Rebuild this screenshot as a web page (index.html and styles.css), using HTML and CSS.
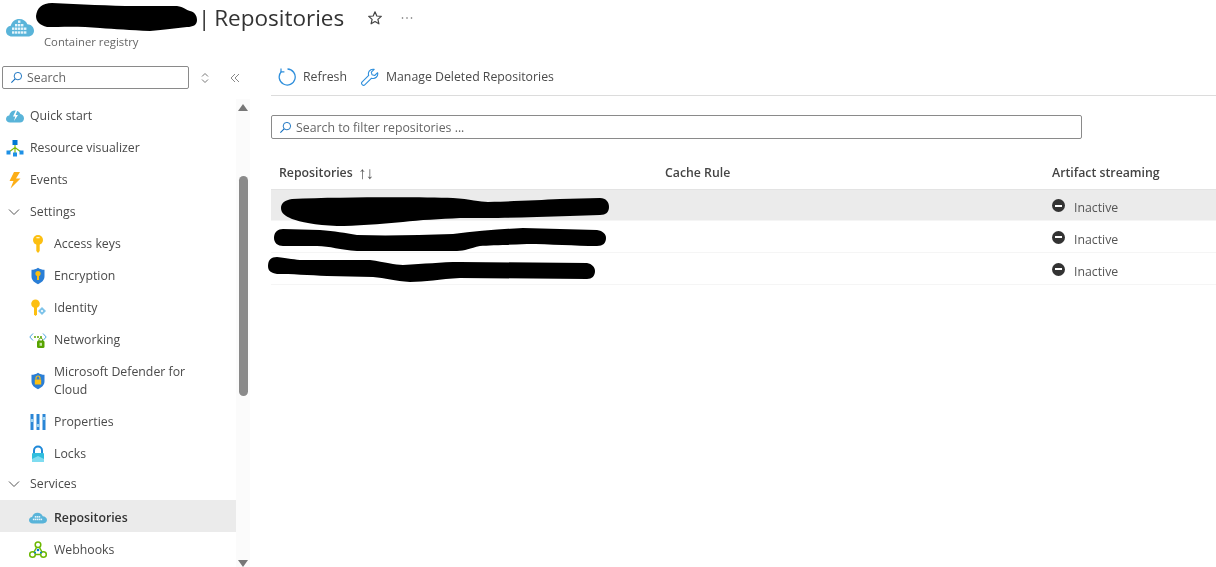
FILE: index.html
```html
<!DOCTYPE html>
<html lang="en">
<head>
<meta charset="utf-8">
<title>Repositories</title>
<link rel="stylesheet" href="styles.css">
</head>
<body>
<div class="page">
  <header class="header">
    <svg class="logo" viewBox="0 0 28 20" aria-hidden="true">
      <path d="M6 19.500C2.600 19.500 0 17.200 0 14c0-2.900 2-5 4.800-5.300C5.800 4.500 9.200 2 13.300 2c3.700 0 6.800 2 8.100 5.300 3.600 0 6.600 2.900 6.600 6.400 0 3.300-2.700 5.800-6 5.800z" fill="#59b4d9"/>
      <g fill="#e4f4fb"><rect x="12" y="3.500" width="2.400" height="2.400"/><rect x="9" y="7" width="2.400" height="2.400"/><rect x="12" y="7" width="2.400" height="2.400"/><rect x="15" y="7" width="2.400" height="2.400"/><rect x="6" y="10.500" width="2.400" height="2.400"/><rect x="9" y="10.500" width="2.400" height="2.400"/><rect x="12" y="10.500" width="2.400" height="2.400"/><rect x="15" y="10.500" width="2.400" height="2.400"/><rect x="18" y="10.500" width="2.400" height="2.400"/><rect x="6" y="14.300" width="2.400" height="2.400"/><rect x="9" y="14.300" width="2.400" height="2.400"/><rect x="12" y="14.300" width="2.400" height="2.400"/><rect x="15" y="14.300" width="2.400" height="2.400"/><rect x="18" y="14.300" width="2.400" height="2.400"/></g>
    </svg>
    <div class="heading">
      <div class="title-row">
        <h1 class="title">| Repositories</h1>
        <svg class="star" viewBox="0 0 16 16" aria-hidden="true"><path d="M8 1.800l1.800 4.200 4.500.4-3.400 3 1 4.400L8 11.500l-3.900 2.300 1-4.400-3.400-3 4.500-.4z" fill="none" stroke="#444" stroke-width="1.200" stroke-linejoin="round"/></svg>
        <svg class="more" viewBox="0 0 12 4" aria-hidden="true"><circle cx="1.500" cy="2" r=".8" fill="#666"/><circle cx="6" cy="2" r=".8" fill="#666"/><circle cx="10.500" cy="2" r=".8" fill="#666"/></svg>
      </div>
      <div class="subtitle">Container registry</div>
    </div>
  </header>

  <div class="body">
    <aside class="sidebar">
      <div class="side-search">
        <div class="search-box">
          <svg class="lens" viewBox="0 0 14 14" aria-hidden="true"><circle cx="8.500" cy="5.500" r="4" fill="none" stroke="#0f6cbd" stroke-width="1"/><path d="M5.500 8.500L1.500 12.500" stroke="#0f6cbd" stroke-width="1.200"/></svg>
          <span>Search</span>
        </div>
        <svg class="updown" viewBox="0 0 8 12" aria-hidden="true"><path d="M1 4.500L4 1.500l3 3M1 7.500l3 3 3-3" fill="none" stroke="#777" stroke-width="1"/></svg>
        <svg class="collapse" viewBox="0 0 10 10" aria-hidden="true"><path d="M5 1L1 5l4 4M9 1L5 5l4 4" fill="none" stroke="#888" stroke-width="1"/></svg>
      </div>
      <div class="nav-wrap">
        <nav class="nav">
          <a class="item">
            <svg class="ico" viewBox="0 0 18 18"><path d="M4 15.500C1.800 15.500 0 14 0 12c0-1.900 1.400-3.300 3.200-3.500C3.800 5.400 6.200 3.500 9 3.500c2.500 0 4.600 1.400 5.400 3.600C16.400 7.400 18 9.200 18 11.400c0 2.300-1.800 4.100-4 4.100z" fill="#59b4d9"/><path d="M10 3L7 9.500h2.300L8 14l4-6H9.600L11.500 3z" fill="#fff"/></svg>
            <span>Quick start</span>
          </a>
          <a class="item">
            <svg class="ico" viewBox="0 0 18 18"><path d="M9 5v6M9 8.500L3 13M9 8.500L15 13M9 11v3" stroke="#7fba00" stroke-width="1.100" fill="none"/><rect x="6.500" y="1" width="5" height="5" fill="#0078d4"/><rect x="0.500" y="11.500" width="4" height="4" fill="#1e90e6"/><rect x="13.500" y="11.500" width="4" height="4" fill="#1e90e6"/><rect x="7" y="13.500" width="4" height="4" fill="#1e90e6"/></svg>
            <span>Resource visualizer</span>
          </a>
          <a class="item">
            <svg class="ico" viewBox="0 0 18 18"><path d="M8 1h6L10 7.500h4.500L4.500 17.500 7.500 10H3.500z" fill="#fcae17"/></svg>
            <span>Events</span>
          </a>
          <a class="item group">
            <svg class="chev" viewBox="0 0 12 8"><path d="M1 1.500l5 5 5-5" fill="none" stroke="#555" stroke-width="1"/></svg>
            <span>Settings</span>
          </a>
          <a class="item sub">
            <svg class="ico" viewBox="0 0 18 18"><circle cx="9" cy="5" r="5" fill="#fcbf11"/><path d="M7.300 8h3.400v8L9 18l-1.700-2z" fill="#fcbf11"/><rect x="7.400" y="2" width="3.200" height="1.300" fill="#fff3c4"/></svg>
            <span>Access keys</span>
          </a>
          <a class="item sub">
            <svg class="ico" viewBox="0 0 18 18"><path d="M9 .800c2 1.600 4.200 2 6.500 2v6.500c0 3.900-3 6.500-6.500 7.900-3.500-1.400-6.500-4-6.500-7.900V2.800c2.300 0 4.500-.4 6.500-2z" fill="#2a7ed6"/><circle cx="9" cy="6.500" r="2.600" fill="#fcbf11"/><rect x="8" y="8" width="2" height="5" fill="#fcbf11"/></svg>
            <span>Encryption</span>
          </a>
          <a class="item sub">
            <svg class="ico" viewBox="0 0 18 18"><circle cx="6.500" cy="4.800" r="4.300" fill="#fcbf11"/><path d="M5 7.500h3v8L6.500 17 5 15.500z" fill="#fcbf11"/><path d="M13 8l4 4-4 4-4-4z" fill="#7fc4ea"/><circle cx="13" cy="12" r="1.100" fill="#fff"/></svg>
            <span>Identity</span>
          </a>
          <a class="item sub">
            <svg class="ico" viewBox="0 0 18 18"><path d="M4 2.500L.8 6 4 9.500M14 2.500L17.200 6 14 9.500" fill="none" stroke="#4aa3df" stroke-width="1"/><g fill="#57a300"><circle cx="6" cy="6" r="1"/><circle cx="9" cy="6" r="1"/><circle cx="12" cy="6" r="1"/></g><rect x="8" y="9.500" width="7.500" height="7.500" rx="1.500" fill="#57a300"/><path d="M10 10V8.500a1.800 1.800 0 013.500 0V10" fill="none" stroke="#57a300"/><rect x="10.600" y="11.800" width="2.400" height="3" fill="#c9e6a5"/></svg>
            <span>Networking</span>
          </a>
          <a class="item sub tall">
            <svg class="ico" viewBox="0 0 18 18"><path d="M9 .800c2 1.600 4.200 2 6.500 2v6.500c0 3.900-3 6.500-6.500 7.900-3.500-1.400-6.500-4-6.500-7.900V2.800c2.300 0 4.500-.4 6.500-2z" fill="#2a7ed6"/><rect x="5.800" y="7.500" width="6.400" height="5" fill="#fcbf11"/><path d="M7 7.500V6a2 2 0 014 0v1.500" fill="none" stroke="#fcbf11" stroke-width="1.200"/></svg>
            <span>Microsoft Defender for Cloud</span>
          </a>
          <a class="item sub">
            <svg class="ico" viewBox="0 0 18 18"><rect x="1.500" y="1" width="3" height="16" fill="#2a86d6"/><rect x="7.500" y="1" width="3" height="16" fill="#2a86d6"/><rect x="13.500" y="1" width="3" height="16" fill="#2a86d6"/><rect x="1.500" y="6" width="3" height="3" fill="#9fd4f2"/><rect x="7.500" y="11" width="3" height="3" fill="#9fd4f2"/><rect x="13.500" y="4" width="3" height="3" fill="#9fd4f2"/></svg>
            <span>Properties</span>
          </a>
          <a class="item sub">
            <svg class="ico" viewBox="0 0 18 18"><path d="M5 8V5.500a4 4 0 018 0V8" fill="none" stroke="#1e88d8" stroke-width="2"/><rect x="3" y="8" width="12" height="9" rx="1" fill="#32bedd"/><path d="M3 14l6-3 6 3v3H3z" fill="#7fdcf0"/></svg>
            <span>Locks</span>
          </a>
          <a class="item group short">
            <svg class="chev" viewBox="0 0 12 8"><path d="M1 1.500l5 5 5-5" fill="none" stroke="#555" stroke-width="1"/></svg>
            <span>Services</span>
          </a>
          <a class="item sub active">
            <svg class="ico" viewBox="0 0 28 20"><path d="M6 18.500C2.600 18.500 0 16.500 0 13.500c0-2.900 2-4.800 4.800-5.100C5.800 4.500 9.200 2 13.300 2c3.700 0 6.800 2 8.100 5.300 3.600 0 6.600 2.700 6.600 6 0 3.100-2.700 5.200-6 5.200z" fill="#59b4d9"/><g fill="#e8f5fb"><rect x="9" y="7" width="2.400" height="2.400"/><rect x="12" y="7" width="2.400" height="2.400"/><rect x="15" y="7" width="2.400" height="2.400"/><rect x="6" y="11" width="2.400" height="2.400"/><rect x="9" y="11" width="2.400" height="2.400"/><rect x="12" y="11" width="2.400" height="2.400"/><rect x="15" y="11" width="2.400" height="2.400"/><rect x="18" y="11" width="2.400" height="2.400"/></g></svg>
            <span>Repositories</span>
          </a>
          <a class="item sub last">
            <svg class="ico" viewBox="0 0 18 18"><g fill="none" stroke="#6bb700" stroke-width="1.500"><circle cx="9" cy="3.800" r="2.800"/><circle cx="3.500" cy="13.500" r="2.800"/><circle cx="14.500" cy="13.500" r="2.800"/><path d="M6 13.500h6M7.800 6L5 11M10.200 6L13 11"/></g><circle cx="9" cy="9" r="1.300" fill="#0078d4"/><circle cx="6" cy="11.500" r="1" fill="#0078d4"/><circle cx="12" cy="11.500" r="1" fill="#0078d4"/></svg>
            <span>Webhooks</span>
          </a>
        </nav>
        <div class="track">
          <span class="arrow up"></span>
          <span class="thumb"></span>
          <span class="arrow down"></span>
        </div>
      </div>
    </aside>

    <main class="main">
      <div class="toolbar">
        <button class="tool">
          <svg class="tool-ico" viewBox="0 0 18 18"><path d="M9.500 1a8 8 0 11-6.300 2.700" fill="none" stroke="#2f8fdc" stroke-width="1.300"/><path d="M3 .5v3.400h3.400" fill="none" stroke="#2f8fdc" stroke-width="1.200"/></svg>
          <span>Refresh</span>
        </button>
        <button class="tool">
          <svg class="tool-ico" viewBox="0 0 18 18"><path d="M12 1.200a4.600 4.600 0 00-4.300 6.200L1.200 13.900a1.900 1.900 0 002.800 2.800l6.600-6.500a4.600 4.600 0 006-5.500l-2.900 2.800-2.700-.8-.7-2.600 2.900-2.800c-.3 0-.1-.1-.2-.1z" fill="none" stroke="#2f8fdc" stroke-width="1.100" stroke-linejoin="round"/></svg>
          <span>Manage Deleted Repositories</span>
        </button>
      </div>
      <div class="filter">
        <svg class="lens" viewBox="0 0 14 14" aria-hidden="true"><circle cx="8.500" cy="5.500" r="4" fill="none" stroke="#0f6cbd" stroke-width="1"/><path d="M5.500 8.500L1.500 12.500" stroke="#0f6cbd" stroke-width="1.200"/></svg>
        <span>Search to filter repositories ...</span>
      </div>
      <div class="table">
        <div class="row head">
          <div class="cell">Repositories <span class="sort">↑↓</span></div>
          <div class="cell">Cache Rule</div>
          <div class="cell">Artifact streaming</div>
        </div>
        <div class="row selected">
          <div class="cell"></div><div class="cell"></div>
          <div class="cell status"><span class="minus"></span>Inactive</div>
        </div>
        <div class="row">
          <div class="cell"></div><div class="cell"></div>
          <div class="cell status"><span class="minus"></span>Inactive</div>
        </div>
        <div class="row">
          <div class="cell"></div><div class="cell"></div>
          <div class="cell status"><span class="minus"></span>Inactive</div>
        </div>
      </div>
    </main>
  </div>

  <svg class="redactions" viewBox="0 0 1216 567" aria-hidden="true">
    <path d="M36 16C37 8 42 3 52 3C80 4 110 6 135 6L177 6C184 7 186 10 190 11C195 12 197 16 197 20C197 25 193 27 187 27C175 28 165 30 150 31C130 30 115 29 100 28C80 26 60 27 47 27C40 25 36 22 36 16Z"/>
    <path d="M281 208C281 203 285 200 292 199C340 197 420 197 453 198C470 199 480 202 488 202C520 201 540 200 560 199L600 198C606 198 609 202 609 207C609 212 606 215 600 215C580 216 560 216 537 217C510 218 480 218 460 218C440 219 420 220 403 222C380 224 355 226 337 226C315 225 300 222 292 219C285 216 281 213 281 208Z"/>
    <path d="M274 238C274 232 278 229 283 229L320 230C335 231 345 233 357 235C390 236 420 235 453 234C475 231 500 229 523 228L597 230C603 231 606 234 606 238C606 243 603 246 597 246C575 246 550 244 527 244C510 245 490 245 480 246C470 248 465 251 457 251L357 251C340 250 330 246 317 246L283 246C278 246 274 243 274 238Z"/>
    <path d="M268 266C268 260 271 257 277 257C288 258 295 260 303 260L370 260C385 262 395 265 403 265C425 264 440 262 460 262L587 263C592 264 595 267 595 271C595 276 592 279 587 279L460 278C440 279 425 282 410 282C395 281 385 278 373 277L327 276C310 275 290 274 277 274C271 273 268 271 268 266Z"/>
  </svg>
</div>
</body>
</html>
```

FILE: styles.css
```css
* { box-sizing: border-box; }
html, body { margin: 0; padding: 0; background: #fff; }
body {
  font-family: "Open Sans", "Noto Sans", "Liberation Sans", sans-serif;
  font-size: 12.3px;
  color: #4a4a4a;
  overflow: hidden;
}
.page {
  position: relative;
  width: 1216px;
  height: 567px;
  display: flex;
  flex-direction: column;
  overflow: hidden;
  filter: blur(0.35px);
}
.header {
  height: 60px;
  flex: none;
  display: flex;
  align-items: flex-start;
  padding: 17px 0 0 6px;
}
.logo { width: 28px; height: 20px; flex: none; margin-right: 10px; }
.heading { display: flex; flex-direction: column; margin-top: -17px; }
.title-row { display: flex; align-items: center; height: 35px; padding-left: 154px; }
.title { margin: 0; font-size: 22.500px; font-weight: 400; word-spacing: -2px; color: #333; line-height: 35px; white-space: nowrap; }
.star { width: 16px; height: 16px; margin-left: 23px; }
.more { width: 12px; height: 4px; margin-left: 18px; margin-top: 1px; }
.subtitle { font-size: 11.300px; color: #666; margin-top: -1px; }

.body { flex: 1; display: grid; grid-template-columns: 250px 1fr; min-height: 0; }
.sidebar { display: flex; flex-direction: column; min-height: 0; }
.side-search { height: 39px; flex: none; display: flex; align-items: flex-start; padding: 6px 0 0 2px; }
.search-box {
  width: 187px;
  height: 23px;
  border: 1px solid #8a8a8a;
  border-radius: 2px;
  display: flex;
  align-items: center;
  gap: 4px;
  padding-left: 7px;
  color: #666;
}
.lens { width: 13px; height: 13px; flex: none; }
.updown { width: 8px; height: 12px; margin: 6px 0 0 12px; }
.collapse { width: 10px; height: 10px; margin: 7px 0 0 21px; }
.nav-wrap { flex: 1; display: flex; min-height: 0; }
.nav { width: 236px; flex: none; display: flex; flex-direction: column; }
.item { height: 32px; flex: none; display: flex; align-items: center; padding: 2px 0 0 6px; color: #4a4a4a; line-height: 18px; }
.ico { width: 18px; height: 18px; flex: none; margin-right: 6px; }
.chev { width: 12px; height: 8px; flex: none; margin: 0 10px 0 2px; }
.sub { padding-left: 29px; }
.sub .ico { margin-right: 7px; }
.tall { height: 50px; padding-right: 40px; }
.short { height: 31px; padding: 0 0 2px 6px; }
.active { background: #ebebeb; color: #333; font-weight: 600; padding-top: 3px; }
.last { padding-top: 3px; }
.track { width: 14px; flex: none; background: #fbfbfb; display: flex; flex-direction: column; align-items: center; padding-top: 5px; }
.arrow { width: 0; height: 0; border-left: 5px solid transparent; border-right: 5px solid transparent; flex: none; }
.up { border-bottom: 7px solid #777; }
.thumb { width: 9px; height: 220px; border-radius: 5px; background: #8a8a8a; margin-top: 65px; flex: none; }
.down { border-top: 7px solid #777; margin-top: auto; }

.main { padding-left: 21px; min-width: 0; }
.toolbar { height: 36px; border-bottom: 1px solid #dcdcdc; display: flex; align-items: center; gap: 14px; padding: 0 0 2px 7px; }
.tool { border: 0; background: none; padding: 0; font: inherit; color: #4a4a4a; display: flex; align-items: center; gap: 7px; }
.tool-ico { width: 18px; height: 18px; flex: none; }
.filter {
  margin-top: 19px;
  width: 811px;
  height: 24px;
  border: 1px solid #8a8a8a;
  border-radius: 2px;
  display: flex;
  align-items: center;
  gap: 4px;
  padding: 1px 0 0 7px;
  color: #666;
}
.table { margin-top: 17px; }
.row { display: grid; grid-template-columns: 386px 387px 1fr; height: 32px; border-bottom: 1px solid #f5f5f5; }
.row.selected { height: 31px; }
.cell { padding-left: 8px; display: flex; align-items: center; white-space: pre; }
.head { height: 34px; border-bottom: 1px solid #e3e3e3; font-weight: 600; color: #444; }
.sort { font-weight: 400; font-size: 17px; line-height: 15px; margin-left: 2px; letter-spacing: -1px; color: #555; }
.selected { background: #ebebeb; }
.status { padding-top: 5px; gap: 9px; color: #555; }
.minus { width: 13px; height: 13px; border-radius: 50%; background: #333; position: relative; flex: none; margin-top: -4px; }
.minus::after { content: ""; position: absolute; left: 3px; right: 3px; top: 5.500px; height: 2px; background: #fff; }
.redactions { position: absolute; left: 0; top: 0; width: 1216px; height: 567px; pointer-events: none; fill: #000; }
```
